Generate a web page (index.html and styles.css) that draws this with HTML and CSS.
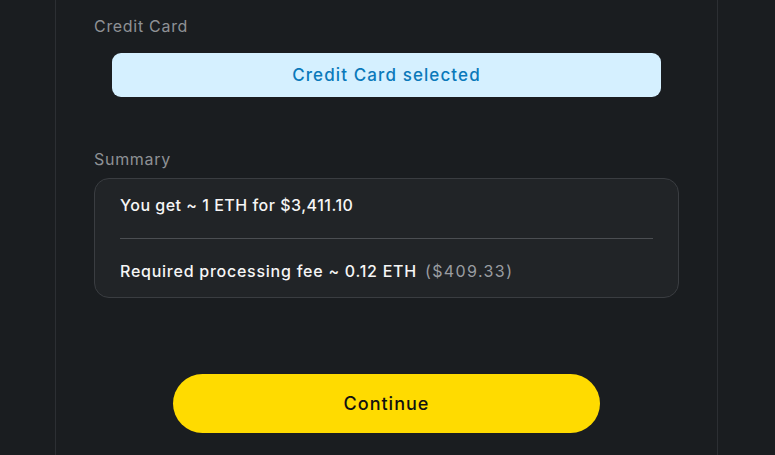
FILE: index.html
```html
<!DOCTYPE html>
<html>
<head>
  <meta charset="UTF-8">
  <meta name="viewport" content="width=device-width, initial-scale=1.0">
  <title>Buy ETH</title>
  <link rel="stylesheet" href="styles.css">
</head>
<body>
  <div class="panel">
    <div class="field">
      <div class="label">Credit Card</div>
      <div class="method">Credit Card selected</div>
    </div>
    <div class="field summary-field">
      <div class="label">Summary</div>
      <div class="summary">
        <div class="row">You get ~ 1 ETH for $3,411.10</div>
        <div class="row fee">Required processing fee ~ 0.12 ETH <span class="muted">($409.33)</span></div>
      </div>
    </div>
    <div class="actions">
      <button class="continue">Continue</button>
    </div>
  </div>
</body>
</html>
```

FILE: styles.css
```css
html,body {height: 100%}
html {background: #1a1d20;color: #fff;}
body {margin: 0;font-family: Inter, "Noto Sans", sans-serif;overflow: hidden;}

.panel {width: 585px;height: 100%;margin-left: 55px;padding: 14px 38px 0 38px;border-left: 1px solid #2c2f33;border-right: 1px solid #2c2f33;}

.label {font-size: 16px;line-height: 24px;letter-spacing: 0.7px;color: #8e9195;}
.summary-field {margin-top: 50px;}

.method {margin: 15px 18px 0;height: 44px;border-radius: 9px;background: #d5f0ff;color: #0a79ba;font-size: 17px;font-weight: 500;letter-spacing: 1.1px;display: flex;align-items: center;justify-content: center;}

.summary {margin-top: 7px;padding: 0 25px;border: 1px solid #3a3d41;border-radius: 15px;background: #212427;}
.row {font-size: 16px;line-height: 24px;font-weight: 500;letter-spacing: 0.5px;color: #f6f6f6;padding: 14px 0 21px;}
.row + .row {border-top: 1px solid #4b4e52;padding: 20px 0 14px;}
.row.fee {letter-spacing: 0.75px;}
.muted {color: #9a9da1;font-weight: 400;letter-spacing: 1.4px;margin-left: 3px;}

.actions {display: flex;justify-content: center;margin-top: 76px;}
.continue {width: 427px;height: 59px;border: 0;border-radius: 30px;background: #ffdb00;color: #111;font-family: inherit;font-size: 18px;font-weight: 500;letter-spacing: 1px;cursor: pointer;}
```
